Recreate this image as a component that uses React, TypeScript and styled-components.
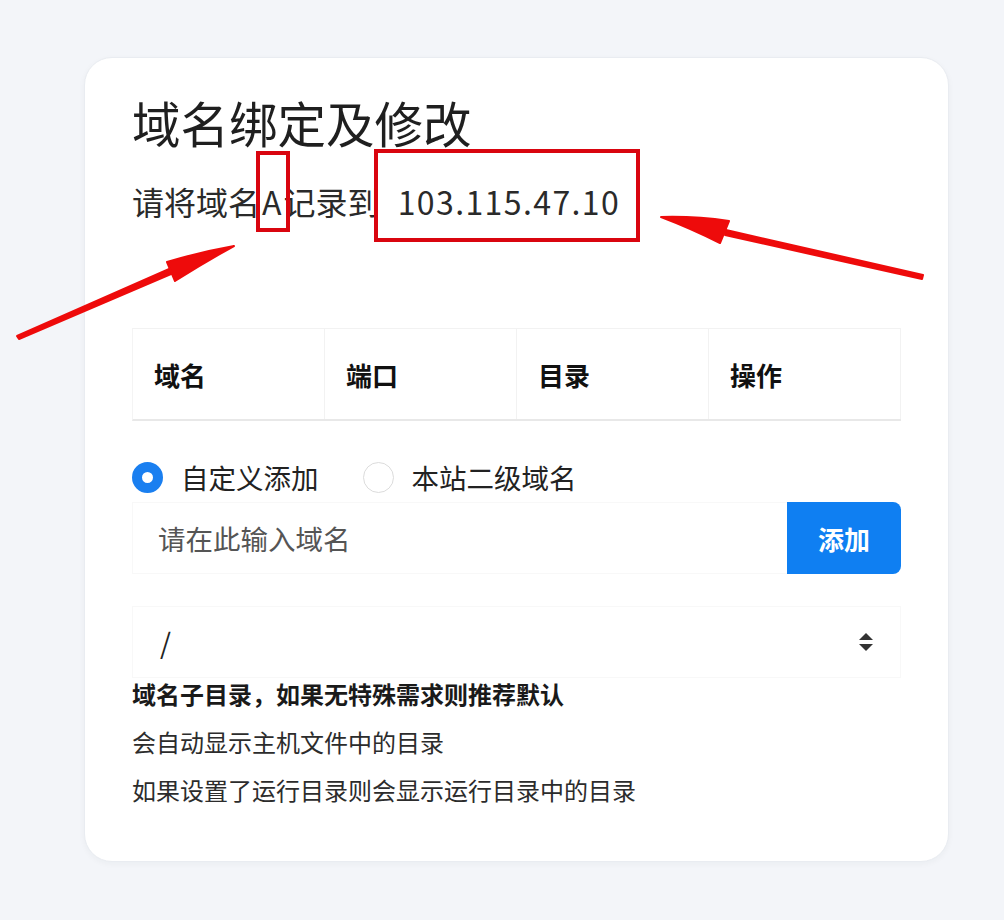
import styled, { createGlobalStyle } from "styled-components";

const GlobalStyle = createGlobalStyle`
  html, body {
    margin: 0;
    padding: 0;
    background: #f3f5f9;
  }
  body {
    font-family: "Noto Sans CJK SC", "Noto Sans", sans-serif;
    color: #222;
  }
`;

const Page = styled.div`
  position: relative;
  width: 1004px;
  height: 920px;
  padding: 57px 0 0 84px;
  box-sizing: border-box;
  overflow: hidden;
`;

const Card = styled.div`
  width: 865px;
  height: 805px;
  box-sizing: border-box;
  background: #fff;
  border: 1px solid #e9ecf1;
  border-radius: 28px;
  box-shadow: 0 2px 6px rgba(30, 40, 60, 0.04);
  padding: 35px 47px 0 47px;
  display: flex;
  flex-direction: column;
`;

const Title = styled.h1`
  margin: 0;
  font-size: 48.5px;
  line-height: 58px;
  font-weight: 400;
  color: #1f1f1f;
`;

const Subtitle = styled.div`
  margin-top: 30px;
  font-size: 32px;
  line-height: 40px;
  color: #2a2a2a;
  white-space: nowrap;
`;

const Marked = styled.span<{ $top: number; $left: number; $w: number; $h: number; $ml?: number; $mr?: number; $track?: number }>`
  position: relative;
  margin-left: ${(p) => p.$ml ?? 0}px;
  margin-right: ${(p) => p.$mr ?? 0}px;
  letter-spacing: ${(p) => p.$track ?? 0}px;
  &::after {
    content: "";
    position: absolute;
    top: ${(p) => p.$top}px;
    left: ${(p) => p.$left}px;
    width: ${(p) => p.$w}px;
    height: ${(p) => p.$h}px;
    border: 4px solid #d9050f;
    box-sizing: border-box;
  }
`;

const Table = styled.div`
  margin-top: 107px;
  display: grid;
  grid-template-columns: repeat(4, 1fr);
  height: 90px;
  border-top: 1px solid #f2f2f2;
  border-left: 1px solid #f4f4f4;
  border-bottom: 2px solid #e8e8e8;
`;

const HeadCell = styled.div`
  display: flex;
  align-items: center;
  padding-left: 21px;
  font-size: 26px;
  font-weight: 700;
  color: #111;
  border-right: 1px solid #f2f2f2;
`;

const RadioRow = styled.div`
  margin-top: 40px;
  display: flex;
  align-items: center;
  height: 32px;
`;

const RadioOption = styled.label`
  display: flex;
  align-items: center;
  gap: 18px;
  font-size: 27.5px;
  color: #222;
  margin-right: 44px;
`;

const RadioDot = styled.span<{ $checked?: boolean }>`
  width: 31px;
  height: 31px;
  border-radius: 50%;
  box-sizing: border-box;
  background: #fff;
  border: ${(p) => (p.$checked ? "10px solid #1a7ff0" : "1px solid #dcdcdc")};
`;

const InputRow = styled.div`
  margin-top: 9px;
  display: flex;
  height: 72px;
`;

const Input = styled.input`
  flex: 1;
  border: 1px solid #f8f8f8;
  border-right: none;
  outline: none;
  padding: 0 0 0 25px;
  font-family: inherit;
  font-size: 27.5px;
  color: #222;
  &::placeholder {
    color: #555;
  }
`;

const AddButton = styled.button`
  width: 114px;
  border: none;
  border-radius: 0 8px 8px 0;
  background: #0f7ff2;
  color: #fff;
  font-family: inherit;
  font-size: 26px;
  font-weight: 700;
`;

const Select = styled.div`
  margin-top: 32px;
  height: 72px;
  box-sizing: border-box;
  display: flex;
  align-items: center;
  justify-content: space-between;
  padding: 0 26px 0 27px;
  border: 1px solid #f8f8f8;
  font-size: 28px;
  color: #222;
`;

const Help = styled.div<{ $bold?: boolean }>`
  margin-top: ${(p) => (p.$bold ? 1 : 18)}px;
  font-size: 24px;
  line-height: 30px;
  font-weight: ${(p) => (p.$bold ? 700 : 400)};
  color: ${(p) => (p.$bold ? "#1a1a1a" : "#2c2c2c")};
`;

const Arrows = styled.svg`
  position: absolute;
  left: 0;
  top: 0;
  pointer-events: none;
`;

const SortIcon = () => (
  <svg width="16" height="20" viewBox="0 0 16 20">
    <path d="M8 1 L15 8 H1 Z" fill="#333" />
    <path d="M8 19 L15 12 H1 Z" fill="#333" />
  </svg>
);

export default function App() {
  return (
    <>
      <GlobalStyle />
      <Page>
        <Card>
          <Title>域名绑定及修改</Title>
          <Subtitle>
            请将域名
            <Marked $top={-27} $left={-6} $w={34} $h={81} $ml={2} $mr={2}>
              A
            </Marked>
            记录到{" "}
            <Marked $top={-29} $left={-24} $w={266} $h={93} $ml={11} $track={1.4}>
              103.115.47.10
            </Marked>
          </Subtitle>

          <Table>
            <HeadCell>域名</HeadCell>
            <HeadCell>端口</HeadCell>
            <HeadCell>目录</HeadCell>
            <HeadCell>操作</HeadCell>
          </Table>

          <RadioRow>
            <RadioOption>
              <RadioDot $checked />
              自定义添加
            </RadioOption>
            <RadioOption>
              <RadioDot />
              本站二级域名
            </RadioOption>
          </RadioRow>

          <InputRow>
            <Input placeholder="请在此输入域名" />
            <AddButton>添加</AddButton>
          </InputRow>

          <Select>
            <span>/</span>
            <SortIcon />
          </Select>

          <Help $bold>域名子目录，如果无特殊需求则推荐默认</Help>
          <Help>会自动显示主机文件中的目录</Help>
          <Help>如果设置了运行目录则会显示运行目录中的目录</Help>
        </Card>

        <Arrows width="1004" height="920" viewBox="0 0 1004 920">
          <path d="M17 336 L176 266 L178 271 L19 339 Z" fill="#ee0b0b" stroke="#ee0b0b" strokeWidth="2" strokeLinejoin="round" />
          <path d="M234 246 Q200 252 167 262 L175 281 Q205 262 234 246 Z" fill="#ee0b0b" stroke="#ee0b0b" strokeWidth="2" strokeLinejoin="round" />
          <path d="M923 275 L726 230 L725 235 L922 279 Z" fill="#ee0b0b" stroke="#ee0b0b" strokeWidth="2" strokeLinejoin="round" />
          <path d="M661 217 Q695 216 729 221 L720 243 Q690 228 661 217 Z" fill="#ee0b0b" stroke="#ee0b0b" strokeWidth="2" strokeLinejoin="round" />
        </Arrows>
      </Page>
    </>
  );
}
